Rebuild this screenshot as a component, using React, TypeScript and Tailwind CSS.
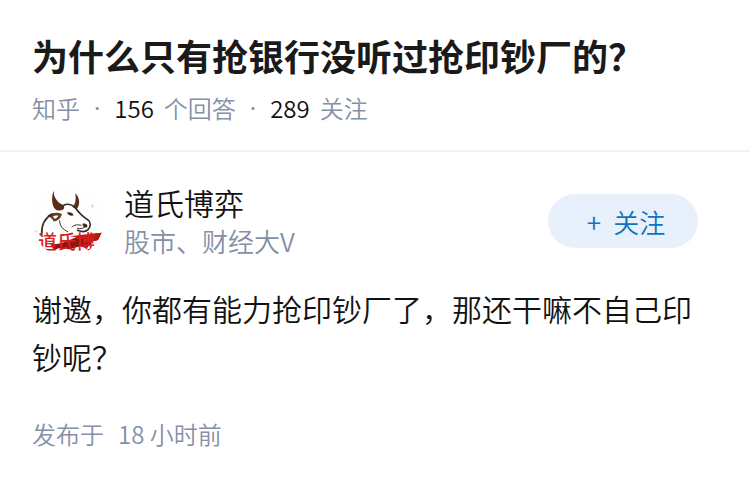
import React from "react";

const question = {
  title: "为什么只有抢银行没听过抢印钞厂的？",
  answers: 156,
  followers: 289,
};

const author = {
  name: "道氏博弈",
  headline: "股市、财经大V",
};

const answer = {
  content: "谢邀，你都有能力抢印钞厂了，那还干嘛不自己印钞呢？",
  published: "18 小时前",
};

// Bull head over a red brush stroke
function Avatar() {
  return (
    <svg
      className="w-18 h-18 shrink-0 rounded-full"
      viewBox="36 18 216 216"
      role="img"
      aria-label={author.name}
    >
      <rect x="36" y="18" width="216" height="216" fill="#fefefe" />
      <circle cx="217" cy="81" r="5" fill="#e3e0dd" />
      <circle cx="49" cy="157" r="4" fill="#e3e0dd" />
      <circle cx="135" cy="230" r="3" fill="#ece8e4" />
      {/* Horns */}
      <path
        d="M102 35C94 48 94 77 105 90C113 98 133 96 133 84C131 75 120 76 115 69C106 59 100 50 102 35Z"
        fill="#5a2c1a"
      />
      <path
        d="M166 43C179 56 182 76 170 91L158 85C168 73 168 59 166 43Z"
        fill="#5a2c1a"
      />
      {/* Ear */}
      <path
        d="M82 111C94 99 113 99 126 105C122 118 112 128 100 127C97 118 91 114 82 111Z"
        fill="#61402b"
      />
      <path d="M99 112C105 109 111 109 115 110C112 116 107 119 103 119Z" fill="#fefefe" />
      {/* Head and neck lines */}
      <g fill="none" stroke="#3d2b20" strokeLinecap="round" strokeLinejoin="round">
        <path d="M96 106C78 115 64 135 65 168" strokeWidth="5" />
        <path d="M129 80C142 73 156 77 164 84C174 98 185 111 203 122C214 130 213 142 204 152C196 160 182 158 173 154" strokeWidth="5" />
        <path d="M119 125C119 141 128 151 143 158" strokeWidth="3" />
        <path d="M156 144C163 137 173 136 183 139" strokeWidth="3" />
        <path d="M172 148C181 151 189 148 194 144" strokeWidth="3" />
      </g>
      <path d="M141 101C150 98 158 102 161 109C152 112 145 108 141 101Z" fill="#3d2b20" />
      <path d="M187 134C197 131 204 137 202 143C197 149 189 145 187 134Z" fill="#3d2b20" />
      {/* Stroke and name */}
      <path
        d="M91 195C121 199 147 181 174 173C200 165 223 165 245 161L235 183L217 187L201 208L180 202L150 211L119 207L102 213Z"
        fill="#8e1713"
      />
      <path d="M149 172L245 161L230 185L204 188L190 178Z" fill="#b71914" />
      <text
        x="54"
        y="210"
        fontSize="57"
        fill="#dc1d1c"
        className="font-['Noto_Sans_CJK_SC',sans-serif] font-medium"
      >
        道氏博
      </text>
    </svg>
  );
}

function Dot() {
  return <span className="font-['Open_Sans',sans-serif] font-normal">·</span>;
}

export default function App() {
  return (
    <main className="bg-white text-[#121212] font-[350] font-['Noto_Sans_CJK_SC',sans-serif]">
      {/* Question */}
      <header className="px-8 pt-[30px] pb-[26px] border-b-2 border-[#f2f2f3]">
        <h1 className="text-[36px] leading-[50px] font-bold text-[#1a1a1a]">
          {question.title}
        </h1>
        <p className="mt-3 flex flex-wrap items-center gap-x-3.5 text-2xl leading-8 text-[#8590a6]">
          <span>知乎</span>
          <Dot />
          <span className="flex gap-2.5">
            <span className="text-[#121212]">{question.answers}</span>
            <span>个回答</span>
          </span>
          <Dot />
          <span className="flex gap-2.5">
            <span className="text-[#121212]">{question.followers}</span>
            <span>关注</span>
          </span>
        </p>
      </header>

      {/* Answer */}
      <article className="px-8 pt-[30px] pb-8">
        <div className="flex items-center">
          <Avatar />
          <div className="ml-5 flex-1">
            <h2 className="text-[30px] leading-10">{author.name}</h2>
            <p className="text-[26px] leading-[38px] text-[#8590a6]">
              {author.headline}
            </p>
          </div>
          <button
            type="button"
            className="mr-5 flex h-[54px] w-[150px] items-center justify-center gap-3 rounded-full bg-[#e8f1fb] pl-1.5 text-[26px] text-[#0f73c0] cursor-pointer"
          >
            <span>+</span>
            <span>关注</span>
          </button>
        </div>

        <p className="mt-6 text-[30px] leading-12">{answer.content}</p>

        <p className="mt-[38px] flex gap-x-3.5 text-2xl leading-8 text-[#8590a6]">
          <span>发布于</span>
          <time>{answer.published}</time>
        </p>
      </article>
    </main>
  );
}
